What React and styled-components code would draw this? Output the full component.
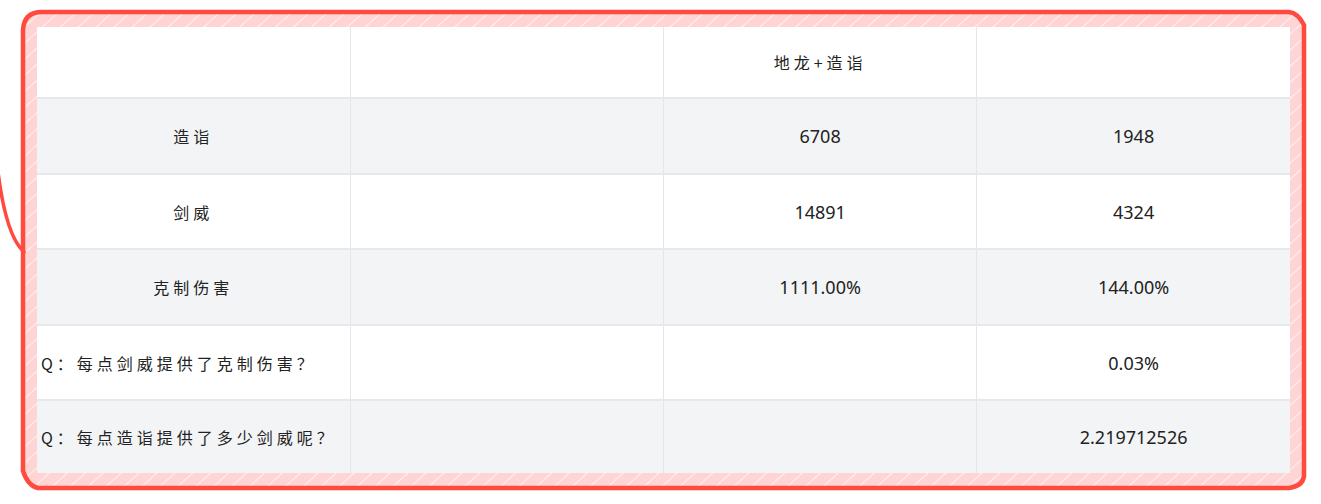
import React from "react";
import styled, { createGlobalStyle } from "styled-components";

const Global = createGlobalStyle`
  html, body { margin: 0; padding: 0; background: #ffffff; }
  body { font-family: "Noto Sans", "Noto Sans CJK SC", sans-serif; color: #222; }
`;

const Page = styled.div`
  position: relative;
  width: 1321px;
  height: 504px;
  box-sizing: border-box;
  padding: 27px 0 0 37px;
  overflow: hidden;
`;

const Sketch = styled.svg`
  position: absolute;
  left: 0;
  top: 0;
  width: 1321px;
  height: 504px;
  pointer-events: none;
`;

const Table = styled.table`
  position: relative;
  width: 1253px;
  border-collapse: collapse;
  table-layout: fixed;
  background: #ffffff;
  tr + tr > td {
    border-top: 2px solid #e6e8eb;
  }
`;

const Row = styled.tr`
  height: ${(p) => p.$h}px;
  background: ${(p) => (p.$shade ? "#f3f4f6" : "#ffffff")};
`;

const Cell = styled.td`
  padding: 0;
  padding-left: ${(p) => (p.$align === "left" ? "4px" : "0")};
  text-align: ${(p) => p.$align || "center"};
  vertical-align: middle;
  white-space: nowrap;
  color: #222;
  font-family: ${(p) =>
    p.$num
      ? `"Noto Sans", "Noto Sans CJK SC", sans-serif`
      : `"Noto Sans CJK SC", "Noto Sans", sans-serif`};
  font-size: ${(p) => (p.$num ? "18px" : "16px")};
  letter-spacing: ${(p) => (p.$num ? "0" : "4px")};
  & + & {
    border-left: 1px solid #e4e6ea;
  }
`;

const rows = [
  { h: 71, cells: [["", false], ["", false], ["地龙+造诣", false], ["", false]] },
  { h: 76, cells: [["造诣", false], ["", false], ["6708", true], ["1948", true]] },
  { h: 75, cells: [["剑威", false], ["", false], ["14891", true], ["4324", true]] },
  { h: 76, cells: [["克制伤害", false], ["", false], ["1111.00%", true], ["144.00%", true]] },
  { h: 75, q: true, cells: [["Q：每点剑威提供了克制伤害？", false], ["", false], ["", true], ["0.03%", true]] },
  { h: 73, q: true, cells: [["Q：每点造诣提供了多少剑威呢？", false], ["", false], ["", true], ["2.219712526", true]] },
];

const framePath =
  "M 23 30 Q 24 12 42 12 L 1289 12 Q 1298 13 1304 25 L 1304 476 Q 1303 486 1289 488 L 38 488 Q 28 486 23 471 Z";

function Frame() {
  return (
    <Sketch viewBox="0 0 1321 504" xmlns="http://www.w3.org/2000/svg">
      <defs>
        <pattern id="hatch" width="12" height="12" patternUnits="userSpaceOnUse" patternTransform="rotate(48)">
          <rect width="12" height="12" fill="#ffd4d4" />
          <line x1="0" y1="0" x2="0" y2="12" stroke="#ffffff" strokeWidth="1.4" />
        </pattern>
      </defs>
      <path d={framePath} fill="url(#hatch)" />
      <path d={framePath} fill="none" stroke="#ff4a3d" strokeWidth="4.5" strokeLinejoin="round" />
      <path d="M -2 172 Q 6 236 24 252" fill="none" stroke="#ff4a3d" strokeWidth="3.5" strokeLinecap="round" />
    </Sketch>
  );
}

export default function App() {
  return (
    <>
      <Global />
      <Page>
        <Frame />
        <Table>
          <tbody>
            {rows.map((r, i) => (
              <Row key={i} $h={r.h} $shade={i % 2 === 1}>
                {r.cells.map(([t, num], j) => (
                  <Cell key={j} $num={num} $align={r.q && j === 0 ? "left" : "center"}>
                    {t}
                  </Cell>
                ))}
              </Row>
            ))}
          </tbody>
        </Table>
      </Page>
    </>
  );
}
